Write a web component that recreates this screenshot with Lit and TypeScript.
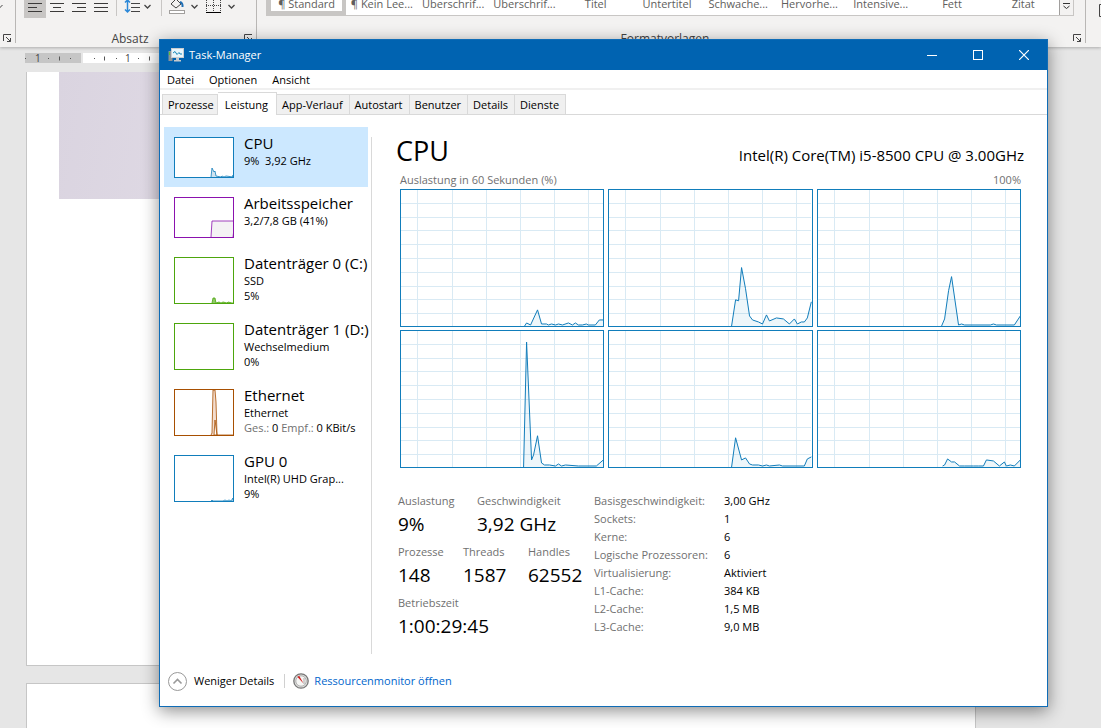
import { LitElement, html, css, svg } from "lit";
import { customElement, property, state } from "lit/decorators.js";
import { classMap } from "lit/directives/class-map.js";

type Series = { color: string; fill: string; points: string };

interface Resource {
  name: string;
  lines: string[];
  graph: Series;
  tall: boolean;
}

const BLUE = "#117dbb";
const VERTICALS = [17, 52, 86, 120, 155, 189];
const HORIZONTALS = [14, 28, 41, 55, 68, 82, 96, 109, 123];

const CORES = [
  "125,136 127,133 131,135 138,120 142,134 147,134 149,135 152,134 156,135 159,134 163,135 169,133 173,135 176,133 179,135 183,135 187,134 189,135 196,135 200,130 204,130",
  "124,136 128,110 131,111 134,78 138,99 142,126 145,130 151,132 155,134 159,125 162,131 169,128 176,129 182,134 187,129 190,134 194,132 197,132 200,128 204,112",
  "125,136 128,129 132,101 135,87 142,135 145,134 148,135 174,135 177,134 180,135 198,135 204,126",
  "124,136 127,12 132,129 134,124 138,105 142,132 145,134 150,134 156,135 159,133 162,135 166,134 179,135 197,135 204,129",
  "124,136 128,107 134,129 138,127 142,133 145,134 151,134 155,135 159,134 162,135 172,134 175,135 197,135 200,128 204,126",
  "126,135 128,134 131,128 135,131 138,131 143,135 148,135 157,135 162,135 167,135 170,129 177,130 183,135 188,131 190,135 194,134 198,135 204,129",
];

const RESOURCES: Resource[] = [
  { name: "CPU", lines: ["9%  3,92 GHz"], tall: false, graph: { color: BLUE, fill: "#cfe3f0", points: "36,39 37,30 39,34 40,33 41,38 46,39 47,38 49,39 51,38 58,39 58,37" } },
  { name: "Arbeitsspeicher", lines: ["3,2/7,8 GB (41%)"], tall: false, graph: { color: "#8b12ae", fill: "#f4f2f4", points: "36,39 37,23 60,23" } },
  { name: "Datenträger 0 (C:)", lines: ["SSD", "5%"], tall: true, graph: { color: "#4da60c", fill: "#8fc967", points: "37,45 38,40 40,40 41,45 44,44 46,45 48,44 52,45 53,44 57,45" } },
  { name: "Datenträger 1 (D:)", lines: ["Wechselmedium", "0%"], tall: true, graph: { color: "#4da60c", fill: "none", points: "" } },
  { name: "Ethernet", lines: ["Ethernet", ""], tall: true, graph: { color: "#a74f01", fill: "#f3ddcf", points: "36,45 37,43 38,0 40,0 41,12 42,45 40,30 39,45" } },
  { name: "GPU 0", lines: ["Intel(R) UHD Grap...", "9%"], tall: true, graph: { color: BLUE, fill: "none", points: "36,45 37,44 38,45 48,45 50,44 52,45 54,44 56,45 58,42" } },
];

const FACTS: [string, string][] = [
  ["Basisgeschwindigkeit:", "3,00 GHz"],
  ["Sockets:", "1"],
  ["Kerne:", "6"],
  ["Logische Prozessoren:", "6"],
  ["Virtualisierung:", "Aktiviert"],
  ["L1-Cache:", "384 KB"],
  ["L2-Cache:", "1,5 MB"],
  ["L3-Cache:", "9,0 MB"],
];

const resetButton = css`
  button {
    appearance: none;
    border: 0;
    margin: 0;
    padding: 0;
    background: none;
    color: inherit;
    font: inherit;
    text-align: left;
  }
`;

@customElement("core-graph")
class CoreGraph extends LitElement {
  @property() points = "";

  static styles = css`
    :host { display: block; border: 1px solid #117dbb; background: #fff; height: 136px; min-width: 0; }
    svg { display: block; width: 100%; height: 100%; }
    .grid line { stroke: #d9eaf4; stroke-width: 1; shape-rendering: crispEdges; vector-effect: non-scaling-stroke; }
    .area { fill: #117dbb; fill-opacity: 0.07; }
    .line { fill: none; stroke: #117dbb; stroke-width: 1; vector-effect: non-scaling-stroke; }
  `;

  render() {
    const first = this.points.split(",")[0];
    return html`<svg viewBox="1 1 203 135" preserveAspectRatio="none" aria-hidden="true">
      <g class="grid">
        ${VERTICALS.map((x) => svg`<line x1=${x + 0.5} x2=${x + 0.5} y1="0" y2="137"></line>`)}
        ${HORIZONTALS.map((y) => svg`<line x1="0" x2="204" y1=${y + 0.5} y2=${y + 0.5}></line>`)}
      </g>
      <polygon class="area" points=${`${first},136 ${this.points} 204,136`}></polygon>
      <polyline class="line" points=${this.points}></polyline>
    </svg>`;
  }
}

@customElement("word-backdrop")
class WordBackdrop extends LitElement {
  static styles = [
    resetButton,
    css`
      :host { display: block; overflow: hidden; color: #444; font-size: 11px; }
      .ribbon { display: flex; height: 47px; background: #f3f2f1; box-shadow: 0 1px 3px rgba(0, 0, 0, 0.25); position: relative; }
      .group { display: flex; flex-direction: column; border-right: 1px solid #b9b7b5; height: 43px; box-sizing: border-box; }
      .edge { width: 16px; }
      .paragraph { width: 241px; }
      .styles { flex: 1; min-width: 0; }
      .tail { width: 15px; }
      .tools { display: flex; flex: 1; padding-left: 8px; }
      .edge .tools { padding-left: 0; }
      .tool { width: 22px; height: 18px; display: flex; }
      .tool.on { background: #c8c6c4; }
      .caption { display: grid; grid-template-columns: minmax(0, 1fr) 12px; text-align: center; height: 9px; line-height: 10px; }
      .caption span { font-size: 12px; }
      .caption svg { width: 9px; height: 9px; grid-column: 2; }
      .gallery { display: flex; height: 16px; box-sizing: border-box; border: 1px solid #c8c6c4; border-top: 0; background: #fff; margin: 0 11px 18px 9px; }
      .gallery .style { display: flex; justify-content: center; align-items: flex-start; flex: 1; min-width: 0; height: 15px; box-sizing: border-box; line-height: 8px; color: #605e5c; white-space: nowrap; }
      .gallery .style.on { border: 4px solid #c8c6c4; border-top: 0; }
      .gallery .more { width: 14px; flex: none; border-left: 1px solid #a19f9d; background: #f3f2f1; }
      .ruler { display: flex; height: 10px; margin: 6px 126px 9px 25px; }
      .ruler svg { display: block; height: 10px; overflow: visible; }
      .ruler .margin { width: 56px; background: #c6c6c6; margin-right: 2px; }
      .ruler .body { flex: 1; background: #fff; }
      text { font-size: 10px; fill: #444; }
      .page { background: #fff; border: 1px solid #c6c6c6; margin: 0 125px 17px 26px; height: 593px; }
      .page.first { border-top: 0; }
      .photo { width: 420px; height: 127px; margin-left: 32px; background: linear-gradient(100deg, #dad4e0, #e0dae5 40%, #d5cfdc); }
    `,
  ];

  launcher() {
    return html`<svg viewBox="0 0 9 9" aria-hidden="true"><path d="M.5 7V.5H8M3 3l4.500 4.500M7.500 4v3.500H4" fill="none" stroke="#444"></path></svg>`;
  }

  lines(rows: [number, number][]) {
    return html`<svg width="22" height="18" viewBox="0 0 22 18" aria-hidden="true">
      ${rows.map(([a, b], i) => svg`<path d="M${a} ${i * 4 - 0.5}H${b}" stroke="#3b3a39"></path>`)}
    </svg>`;
  }

  render() {
    const names = ["¶ Standard", "¶ Kein Lee...", "Überschrif...", "Überschrif...", "Titel", "Untertitel", "Schwache...", "Hervorhe...", "Intensive...", "Fett", "Zitat"];
    return html`
      <header class="ribbon">
        <div class="group edge">
          <div class="tools"><svg width="4" height="12" viewBox="0 0 4 12" aria-hidden="true"><path d="M-3.500 5l3 3 3-3" fill="none" stroke="#444"></path></svg></div>
          <div class="caption">${this.launcher()}</div>
        </div>
        <div class="group paragraph">
          <div class="tools">
            <button class="tool on" aria-label="Linksbündig">${this.lines([[4, 18], [4, 18], [4, 13], [4, 18]])}</button>
            <button class="tool" aria-label="Zentriert">${this.lines([[4, 18], [4, 18], [7, 15], [4, 18]])}</button>
            <button class="tool" aria-label="Rechtsbündig">${this.lines([[4, 18], [4, 18], [9, 18], [4, 18]])}</button>
            <button class="tool" aria-label="Blocksatz">${this.lines([[4, 18], [4, 18], [4, 18], [4, 18]])}</button>
            <svg width="144" height="18" viewBox="112 0 144 18" fill="none" stroke="#444" aria-hidden="true">
              <path d="M116.500 0V16M161.500 0V16" stroke="#c8c6c4"></path>
              <path d="M127.500 0v12M125 2.500l2.500-2.500 2.500 2.500M125 9.500l2.500 2.500 2.500-2.500" stroke="#2b88d8" stroke-width="1.500"></path>
              <path d="M131 3.500h9M131 7.500h9M131 11.500h9"></path>
              <path d="M144.500 5l3 3 3-3M191.500 5l3 3 3-3M228.500 5l3 3 3-3" stroke-width="1.300"></path>
              <path d="M171 4l5-5 5 5-5 4z"></path>
              <path d="M180 2q3 1 2.500 5" stroke="#1f6fb5" stroke-width="2"></path>
              <rect x="169.500" y="10.500" width="15" height="3" stroke="#a19f9d" fill="#fff"></rect>
              <path d="M206.500 0v12M220.500 0v12M213.500 0v12M206 5.500h15" stroke-dasharray="1 1"></path>
              <path d="M206 12.500h15" stroke="#000"></path>
            </svg>
          </div>
          <div class="caption"><span>Absatz</span>${this.launcher()}</div>
        </div>
        <div class="group styles">
          <div class="gallery">
            ${names.map((n, i) => html`<button class=${classMap({ style: true, on: i === 0 })}>${n}</button>`)}
            <button class="more" aria-label="Weitere Formatvorlagen">
              <svg width="13" height="16" viewBox="0 0 13 16" fill="none" stroke="#333" aria-hidden="true"><path d="M3 3.500h7M3.500 6l3 2.500 3-2.500"></path></svg>
            </button>
          </div>
          <div class="caption"><span>Formatvorlagen</span>${this.launcher()}</div>
        </div>
        <div class="tail"><svg width="15" height="20" viewBox="0 0 15 20" fill="none" stroke="#444" aria-hidden="true"><path d="M15 4.500h-1.500v12h1.500"></path></svg></div>
      </header>
      <div class="ruler">
        <div class="margin">
          <svg width="56" viewBox="0 0 56 10" stroke="#555">
            <path d="M0 5.500h1M23 5.500h1M45 5.500h1M34.500 3.500v4"></path><text x="10" y="9" stroke="none">1</text>
          </svg>
        </div>
        <div class="body">
          <svg width="76" viewBox="0 0 76 10" stroke="#555">
            <path d="M11 5.500h1M33 5.500h1M55 5.500h1M21.500 3.500v4M66.500 3.500v4"></path><text x="42" y="9" stroke="none">1</text>
          </svg>
        </div>
      </div>
      <div class="page first"><div class="photo"></div></div>
      <div class="page"></div>
    `;
  }
}

@customElement("task-manager")
class TaskManager extends LitElement {
  @state() selected = 0;
  @state() tab = 1;

  static styles = [
    resetButton,
    css`
      :host { display: flex; flex-direction: column; box-sizing: border-box; border: 1px solid #0f6cb6; background: #fff; color: #000; font-size: 11px; line-height: 16px; box-shadow: 0 4px 16px rgba(0, 0, 0, 0.45); }
      .title { display: flex; align-items: center; height: 30px; background: #0063b1; color: #fff; padding-left: 8px; }
      .title h1 { flex: 1; margin: 0 0 0 5px; font-size: 11px; font-weight: 400; }
      .title button { width: 46px; height: 30px; display: grid; place-items: center; }
      .menu { display: flex; gap: 15px; height: 18px; padding-left: 7px; border-bottom: 2px solid #f0f0f0; line-height: 20px; }
      .tabs { display: flex; align-items: flex-end; height: 24px; padding-left: 2px; border-bottom: 1px solid #d9d9d9; }
      .tabs button { height: 20px; box-sizing: border-box; background: #f0f0f0; border: 1px solid #d9d9d9; border-bottom: 0; border-left-width: 0; padding: 0 6px 0 5px; line-height: 19px; }
      .tabs button:first-child { border-left-width: 1px; padding-right: 3px; }
      .tabs button.on { height: 23px; margin-bottom: -1px; background: #fff; padding: 0 8px 0 7px; }
      .main { display: grid; grid-template-columns: 204px 1px minmax(0, 1fr); column-gap: 3px; padding: 12px 26px 0 4px; }
      .resource { display: flex; width: 204px; height: 60px; box-sizing: border-box; padding: 10px 0 0 10px; gap: 10px; }
      .resource.tall { height: 66px; }
      .resource.on { background: #cce8ff; }
      .spark { box-sizing: border-box; width: 60px; height: 41px; flex: none; background: #fff; border: 1px solid; }
      .tall .spark { height: 47px; }
      .resource .info { display: flex; flex-direction: column; white-space: pre; line-height: 15px; }
      .resource .name { font-size: 15px; line-height: 12px; margin-bottom: 4px; }
      .muted { color: #707070; }
      .divider { background: #d9d9d9; margin-top: 10px; }
      .detail { padding-left: 21px; min-width: 0; }
      .heading { display: flex; justify-content: space-between; align-items: baseline; height: 46px; }
      .heading h2 { margin: 0; font-size: 27px; line-height: 48px; font-weight: 400; }
      .heading .model { font-size: 15px; margin-right: -3px; }
      .axis { display: flex; justify-content: space-between; padding-left: 4px; height: 16px; line-height: 14px; color: #707070; }
      .graphs { display: grid; grid-template-columns: repeat(3, minmax(0, 1fr)); gap: 3px 4px; padding-left: 4px; }
      .stats { display: flex; gap: 12px; padding: 25px 0 0 2px; height: 161px; }
      .left { width: 184px; }
      dl, dt, dd { margin: 0; }
      .row { display: flex; height: 51px; margin: 0; }
      .row div { white-space: nowrap; flex: none; }
      .wide div { width: 79px; }
      .narrow div { width: 65px; }
      dt { color: #707070; }
      .row dd { font-size: 19px; line-height: 30px; }
      .facts { display: grid; grid-template-columns: 130px auto; align-content: start; line-height: 18px; margin-top: -1px; }
      .footer { display: flex; align-items: center; height: 52px; box-sizing: border-box; padding: 2px 0 0 8px; }
      .fewer { display: flex; align-items: center; gap: 7px; padding-right: 10px; }
      .monitor { display: flex; align-items: center; gap: 5px; padding-left: 8px; color: #0066cc; text-decoration: none; }
      .bar { width: 1px; height: 14px; background: #d0d0d0; }
      svg { display: block; }
    `,
  ];

  spark(g: Series, tall: boolean) {
    const h = tall ? 45 : 39;
    return html`<span class="spark" style="border-color:${g.color}">
      <svg width="58" height=${h} viewBox="0 0 58 ${h}" aria-hidden="true">
        <polyline points=${g.points ? `${g.points} 58,${h}` : ""} fill=${g.fill} stroke=${g.color} stroke-width="0.800"></polyline>
      </svg>
    </span>`;
  }

  resource(r: Resource, i: number) {
    return html`<button class=${classMap({ resource: true, tall: r.tall, on: i === this.selected })} @click=${() => (this.selected = i)}>
      ${this.spark(r.graph, r.tall)}
      <span class="info"><span class="name">${r.name}</span>${r.lines.map((l) =>
        l ? html`<span>${l}</span>` : html`<span><span class="muted">Ges.:</span> 0 <span class="muted">Empf.:</span> 0 KBit/s</span>`
      )}</span>
    </button>`;
  }

  stat(label: string, value: string) {
    return html`<div><dt>${label}</dt><dd>${value}</dd></div>`;
  }

  render() {
    const tabs = ["Prozesse", "Leistung", "App-Verlauf", "Autostart", "Benutzer", "Details", "Dienste"];
    return html`
      <header class="title">
        <svg width="16" height="16" viewBox="0 0 16 16" aria-hidden="true">
          <rect x="0.500" y="4" width="4" height="10" fill="#8d9499"></rect>
          <rect x="1" y="5" width="1" height="3" fill="#5ec232"></rect>
          <rect x="3.500" y="1.500" width="12" height="9" fill="#e8f6fc" stroke="#c9cdd0"></rect>
          <path d="M5 6l2-1.500 2 3 2-2 1 1.500h2" fill="none" stroke="#1786b8"></path>
          <path d="M8 11h3v2h2v1.500H6V13h2z" fill="#c5c9cc"></path>
        </svg>
        <h1>Task-Manager</h1>
        <button aria-label="Minimieren"><svg width="10" height="10" stroke="#fff"><path d="M0 5.500h10"></path></svg></button>
        <button aria-label="Maximieren"><svg width="10" height="10" fill="none" stroke="#fff"><rect x="0.500" y="0.500" width="9" height="9"></rect></svg></button>
        <button aria-label="Schließen"><svg width="10" height="10" stroke="#fff" stroke-width="1.200"><path d="M0 0l10 10M10 0L0 10"></path></svg></button>
      </header>
      <nav class="menu"><button>Datei</button><button>Optionen</button><button>Ansicht</button></nav>
      <div class="tabs" role="tablist">
        ${tabs.map((t, i) => html`<button role="tab" class=${i === this.tab ? "on" : ""} aria-selected=${i === this.tab} @click=${() => (this.tab = i)}>${t}</button>`)}
      </div>
      <div class="main">
        <div>${RESOURCES.map((r, i) => this.resource(r, i))}</div>
        <div class="divider"></div>
        <section class="detail">
          <div class="heading"><h2>CPU</h2><span class="model">Intel(R) Core(TM) i5-8500 CPU @ 3.00GHz</span></div>
          <div class="axis"><span>Auslastung in 60 Sekunden (%)</span><span>100%</span></div>
          <div class="graphs">${CORES.map((p) => html`<core-graph .points=${p}></core-graph>`)}</div>
          <div class="stats">
            <div class="left">
              <dl class="row wide">${this.stat("Auslastung", "9%")}${this.stat("Geschwindigkeit", "3,92 GHz")}</dl>
              <dl class="row narrow">${this.stat("Prozesse", "148")}${this.stat("Threads", "1587")}${this.stat("Handles", "62552")}</dl>
              <dl class="row">${this.stat("Betriebszeit", "1:00:29:45")}</dl>
            </div>
            <dl class="facts">${FACTS.map(([k, v]) => html`<dt>${k}</dt><dd>${v}</dd>`)}</dl>
          </div>
        </section>
      </div>
      <footer class="footer">
        <button class="fewer">
          <svg width="19" height="19" fill="none" stroke="#999" aria-hidden="true"><circle cx="9.500" cy="9.500" r="9"></circle><path d="M5.500 11.500l4-4 4 4" stroke-width="1.600"></path></svg>
          Weniger Details
        </button>
        <span class="bar"></span>
        <a class="monitor" href="#">
          <svg width="16" height="16" viewBox="0 0 16 16" aria-hidden="true">
            <circle cx="8" cy="8" r="7.200" fill="#dcdcda" stroke="#777" stroke-width="1.300"></circle>
            <circle cx="8" cy="8" r="5.200" fill="#f6f6f4" stroke="#a5a5a5" stroke-width="0.800"></circle>
            <path d="M4.300 3.700l2-.8 4.200 7.600z" fill="#d11a1a"></path>
            <path d="M11 5v6" stroke="#aaa"></path>
          </svg>
          Ressourcenmonitor öffnen
        </a>
      </footer>
    `;
  }
}

@customElement("app-root")
class AppRoot extends LitElement {
  static styles = css`
    :host { display: block; position: relative; height: 100vh; overflow: hidden; background: #e6e6e6; font-family: "Open Sans", "Noto Sans", sans-serif; }
    task-manager { position: absolute; left: 159px; right: 53px; top: 39px; }
  `;

  render() {
    return html`<word-backdrop></word-backdrop><task-manager></task-manager>`;
  }
}
